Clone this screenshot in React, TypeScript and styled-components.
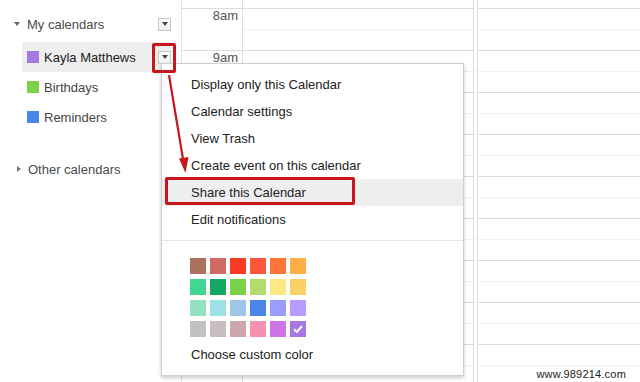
import React from "react";
import styled, { createGlobalStyle } from "styled-components";

const GlobalStyle = createGlobalStyle`
  body {
    margin: 0;
    background: #fff;
    font-family: "Liberation Sans", Arial, sans-serif;
  }
`;

const Page = styled.div`
  position: relative;
  display: flex;
  width: 640px;
  height: 382px;
  overflow: hidden;
  background: #fff;
`;

const Sidebar = styled.div`
  width: 182px;
  flex-shrink: 0;
  box-sizing: border-box;
  padding-top: 10px;
  border-right: 1px solid #e2e2e2;
`;

const SectionHeader = styled.div<{ $gap?: number }>`
  display: flex;
  align-items: center;
  height: 28px;
  padding: 0 10px 0 14px;
  margin-top: ${(p) => p.$gap ?? 0}px;
  font-size: 13px;
  color: #4a4a4a;
`;

const Caret = styled.span<{ $open?: boolean }>`
  width: 0;
  height: 0;
  ${(p) =>
    p.$open
      ? `border-left: 3.5px solid transparent;
         border-right: 3.5px solid transparent;
         border-top: 4px solid #666;
         margin-right: 7px;`
      : `border-top: 3.5px solid transparent;
         border-bottom: 3.5px solid transparent;
         border-left: 4px solid #777;
         margin-left: 3px;
         margin-right: 7px;`}
`;

const DropButton = styled.span`
  margin-left: auto;
  width: 13px;
  height: 13px;
  box-sizing: border-box;
  border: 1px solid #c4c4c4;
  background: linear-gradient(#fdfdfd, #f1f1f1);
  display: flex;
  align-items: center;
  justify-content: center;

  &::after {
    content: "";
    border-left: 3.5px solid transparent;
    border-right: 3.5px solid transparent;
    border-top: 4px solid #444;
  }
`;

const CalList = styled.div`
  padding: 4px 10px 0 22px;
`;

const CalRow = styled.div<{ $active?: boolean }>`
  display: flex;
  align-items: center;
  height: 30px;
  padding-left: 5px;
  font-size: 13px;
  color: ${(p) => (p.$active ? "#222" : "#444")};
  background: ${(p) => (p.$active ? "#eeeeee" : "transparent")};
`;

const Swatch = styled.span<{ $color: string }>`
  width: 12px;
  height: 12px;
  margin-right: 5px;
  background: ${(p) => p.$color};
`;

const TimeCol = styled.div`
  width: 61px;
  flex-shrink: 0;
  box-sizing: border-box;
  border-right: 1px solid #dcdcdc;
`;

const TopGap = styled.div`
  height: 8px;
`;

const TimeSlot = styled.div`
  height: 42px;
  box-sizing: border-box;
  border-top: 1px solid #dcdcdc;
  padding: 0 4px 0 0;
  line-height: 13px;
  text-align: right;
  font-size: 13px;
  color: #555;
`;

const DayCol = styled.div<{ $width?: number; $leftLine?: boolean }>`
  ${(p) => (p.$width ? `width: ${p.$width}px; flex-shrink: 0;` : "flex: 1;")}
  box-sizing: border-box;
  ${(p) =>
    p.$leftLine
      ? "border-left: 1px solid #dcdcdc; margin-left: 3px;"
      : "border-right: 1px solid #dcdcdc;"}
`;

const HourSlot = styled.div`
  height: 42px;
  box-sizing: border-box;
  border-top: 1px solid #dcdcdc;
`;

const HalfSlot = styled.div`
  height: 21px;
  box-sizing: border-box;
  border-bottom: 1px solid #efefef;
`;

const Menu = styled.div`
  position: absolute;
  left: 161px;
  top: 63px;
  width: 303px;
  height: 313px;
  box-sizing: border-box;
  padding-top: 7px;
  background: #fff;
  border: 1px solid #cfcfcf;
  box-shadow: 0 2px 4px rgba(0, 0, 0, 0.2);
`;

const MenuItem = styled.div<{ $hover?: boolean }>`
  height: 27px;
  display: flex;
  align-items: center;
  padding-left: 29px;
  font-size: 13px;
  color: #222;
  background: ${(p) => (p.$hover ? "#eeeeee" : "transparent")};
`;

const Separator = styled.div`
  margin-top: 7px;
  border-top: 1px solid #e5e5e5;
`;

const ColorGrid = styled.div`
  display: grid;
  grid-template-columns: repeat(6, 16px);
  column-gap: 4px;
  row-gap: 5px;
  margin: 17px 0 0 28px;
`;

const ColorCell = styled.span<{ $color: string }>`
  width: 16px;
  height: 16px;
  display: flex;
  align-items: center;
  justify-content: center;
  background: ${(p) => p.$color};
`;

const CustomColor = styled.div`
  margin: 9px 0 0 29px;
  line-height: 18px;
  font-size: 13px;
  color: #222;
`;

const Annotation = styled.div<{ $l: number; $t: number; $w: number; $h: number }>`
  position: absolute;
  left: ${(p) => p.$l}px;
  top: ${(p) => p.$t}px;
  width: ${(p) => p.$w}px;
  height: ${(p) => p.$h}px;
  box-sizing: border-box;
  border: 3px solid #c8161e;
  border-radius: 2px;
  pointer-events: none;
`;

const ArrowLayer = styled.svg`
  position: absolute;
  left: 0;
  top: 0;
  pointer-events: none;
`;

const Watermark = styled.div`
  position: absolute;
  right: 14px;
  bottom: 2px;
  font-size: 11px;
  color: #222;
  letter-spacing: 0.2px;
`;

const palette = [
  "#ac725e", "#d06b64", "#f83a22", "#fa573c", "#ff7537", "#ffad46",
  "#42d692", "#16a765", "#7bd148", "#b3dc6c", "#fbe983", "#fad165",
  "#92e1c0", "#9fe1e7", "#9fc6e7", "#4986e7", "#9a9cff", "#b99aff",
  "#c2c2c2", "#cabdbf", "#cca6ac", "#f691b2", "#cd74e6", "#a47ae2",
];

const menuItems = [
  "Display only this Calendar",
  "Calendar settings",
  "View Trash",
  "Create event on this calendar",
  "Share this Calendar",
  "Edit notifications",
];

const hours = ["8am", "9am", "", "", "", "", "", "", ""];

const DayGrid = () => (
  <>
    <TopGap />
    {hours.map((_, i) => (
      <HourSlot key={i}>
        <HalfSlot />
      </HourSlot>
    ))}
  </>
);

const App = () => {
  return (
    <>
      <GlobalStyle />
      <Page>
        <Sidebar>
          <SectionHeader>
            <Caret $open />
            My calendars
            <DropButton />
          </SectionHeader>
          <CalList>
            <CalRow $active>
              <Swatch $color="#a47ae2" />
              Kayla Matthews
              <DropButton />
            </CalRow>
            <CalRow>
              <Swatch $color="#7bd148" />
              Birthdays
            </CalRow>
            <CalRow>
              <Swatch $color="#4986e7" />
              Reminders
            </CalRow>
          </CalList>
          <SectionHeader $gap={23}>
            <Caret />
            Other calendars
          </SectionHeader>
        </Sidebar>

        <TimeCol>
          <TopGap />
          {hours.map((h, i) => (
            <TimeSlot key={i}>{h}</TimeSlot>
          ))}
        </TimeCol>

        <DayCol $width={231}>
          <DayGrid />
        </DayCol>
        <DayCol $leftLine>
          <DayGrid />
        </DayCol>

        <Menu>
          {menuItems.map((item) => (
            <MenuItem key={item} $hover={item === "Share this Calendar"}>
              {item}
            </MenuItem>
          ))}
          <Separator />
          <ColorGrid>
            {palette.map((c, i) => (
              <ColorCell key={i} $color={c}>
                {i === palette.length - 1 && (
                  <svg width="10" height="8" viewBox="0 0 10 8">
                    <path
                      d="M1 4.2 L3.8 7 L9 1.2"
                      fill="none"
                      stroke="#fff"
                      strokeWidth="2"
                    />
                  </svg>
                )}
              </ColorCell>
            ))}
          </ColorGrid>
          <CustomColor>Choose custom color</CustomColor>
        </Menu>

        <Annotation $l={152} $t={43} $w={24} $h={30} />
        <Annotation $l={165} $t={177} $w={190} $h={28} />

        <ArrowLayer width="640" height="382">
          <line x1="169" y1="75" x2="183.2" y2="160" stroke="#c8161e" strokeWidth="2.2" />
          <polygon points="185.5,173 179,158.5 188.5,157" fill="#c8161e" />
        </ArrowLayer>

        <Watermark>www.989214.com</Watermark>
      </Page>
    </>
  );
};

export default App;
